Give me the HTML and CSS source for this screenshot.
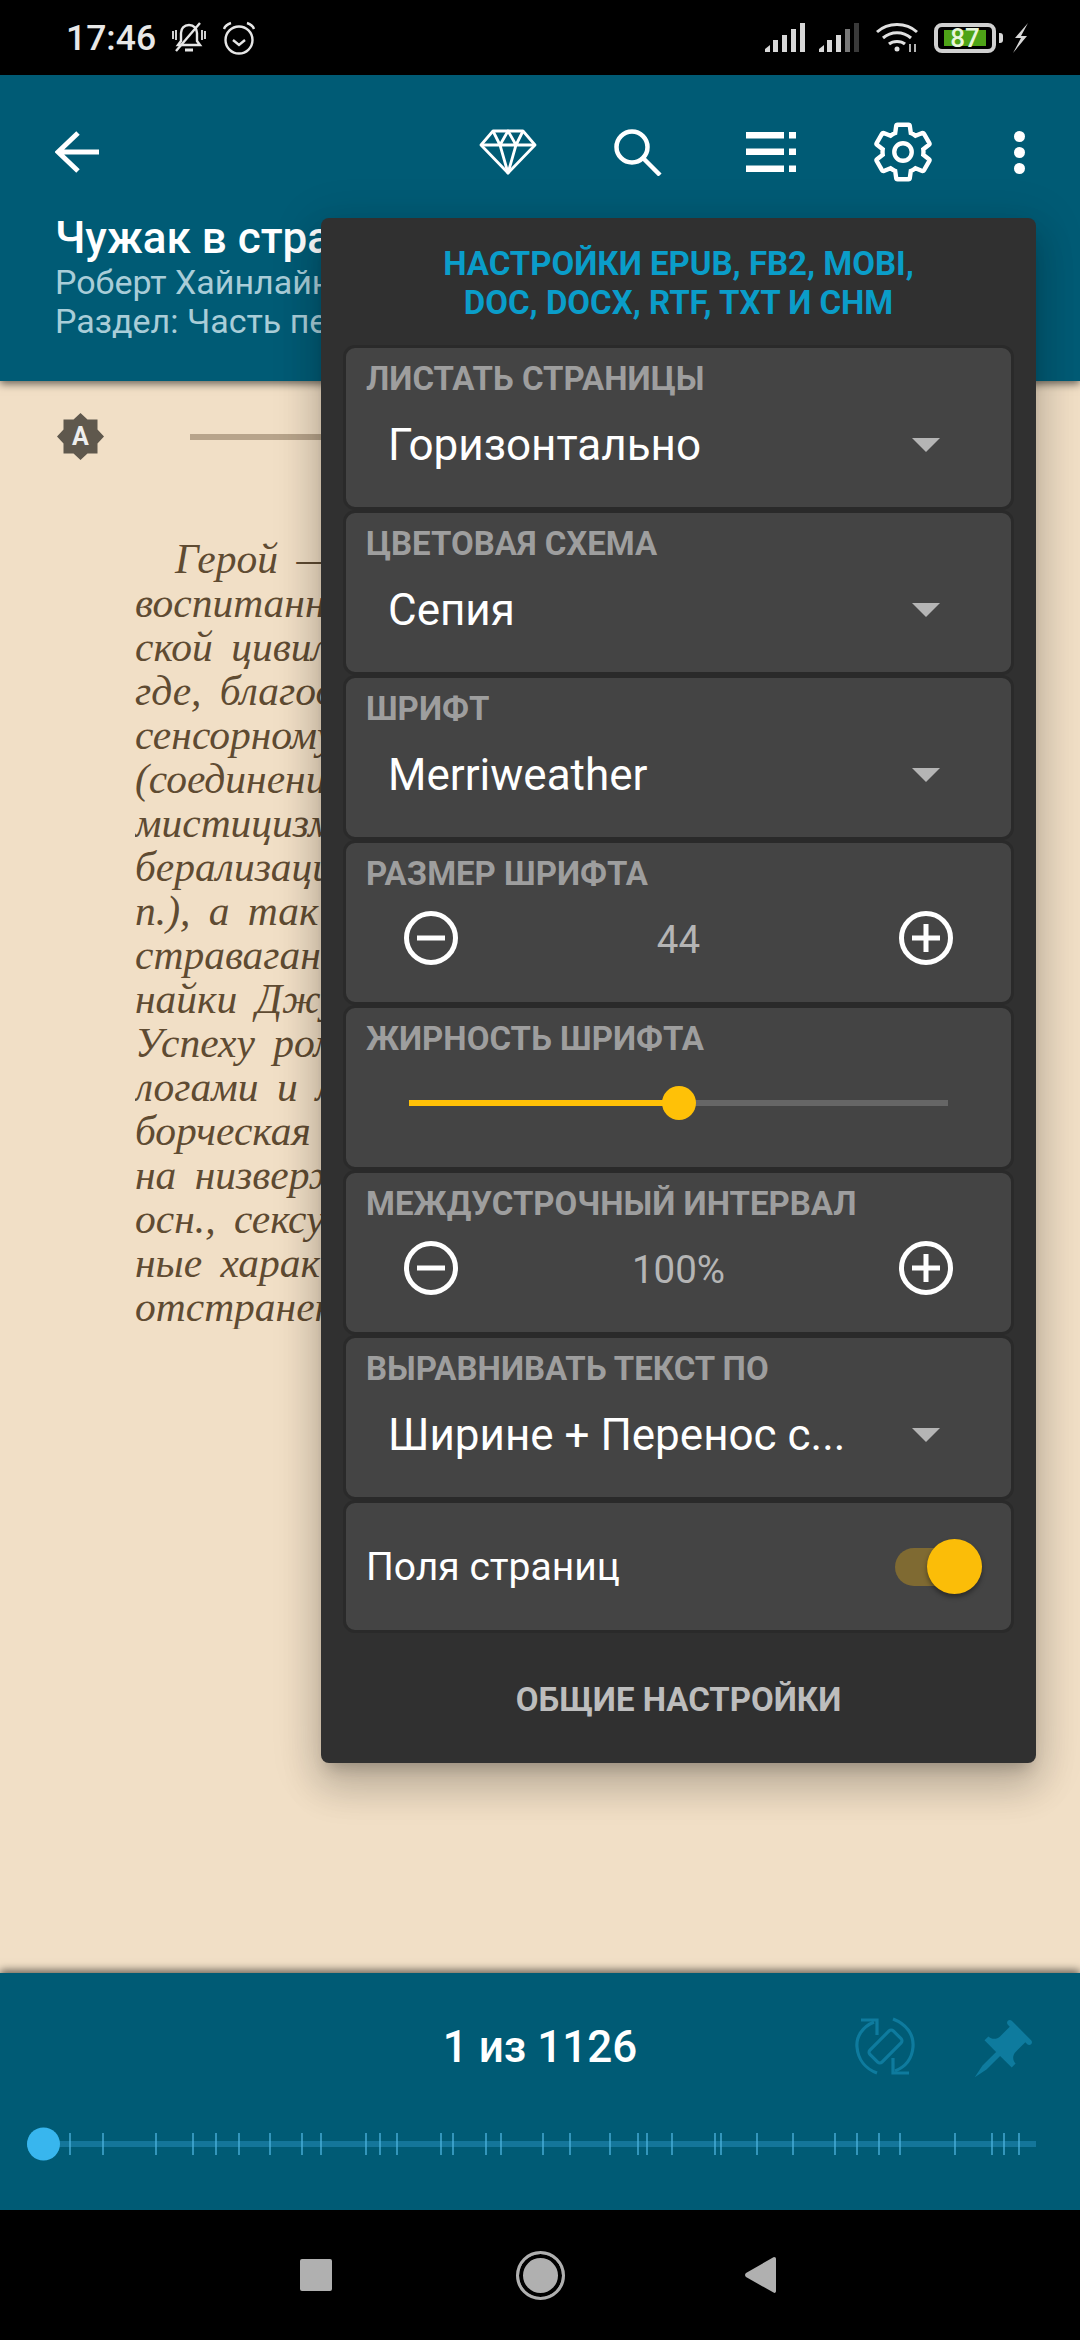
FILE: index.html
```html
<!DOCTYPE html>
<html lang="ru">
  <head>
    <meta charset="UTF-8" />
    <meta name="viewport" content="width=device-width, initial-scale=1.0" />
    <title>Чужак в стране</title>
    <link rel="stylesheet" href="styles.css">
  </head>
  <body>
    <div class="screen">
      <div class="statusbar">
        <span class="clock">17:46</span>
        <svg class="st-bell" viewBox="0 0 34 32" fill="none" stroke="#e6e6e6" stroke-width="2.4">
          <path d="M17 3c-5 0-8 3.500-8 8v8l-3 4h22l-3-4v-8c0-4.500-3-8-8-8z" />
          <path d="M13 28h8" stroke-width="3" />
          <path d="M1 9v8M33 9v8M4 8v10M30 8v10" stroke-width="1.800" />
          <path d="M28 1 4 29" />
        </svg>
        <svg class="st-alarm" viewBox="0 0 34 34" fill="none" stroke="#e6e6e6" stroke-width="2.400">
          <circle cx="17" cy="19" r="13.500" />
          <path d="M11 19l6 5 6-5" />
          <path d="M2 8c1-3 4-5 7-6M32 8c-1-3-4-5-7-6" />
        </svg>
        <div class="status-right">
          <svg class="st-signal" viewBox="0 0 40 29" fill="#d8d8d8">
            <path d="M0 29v-3l5-4v7zM8 29V17h5v12zM17 29V12h5v17zM26 29V6h5v23zM35 29V0h5v29z" />
          </svg>
          <svg class="st-signal" viewBox="0 0 40 29" fill="#d8d8d8">
            <path d="M0 29v-3l5-4v7zM8 29V17h5v12zM17 29V12h5v17z" />
            <path d="M26 29V6h5v23z" fill="#777" />
            <path d="M35 29V0h5v29z" fill="#3a3a3a" />
          </svg>
          <svg class="st-wifi" viewBox="0 0 42 30" fill="none" stroke="#e0e0e0" stroke-width="3">
            <path d="M1 9c11-10 29-10 40 0M7 15c8-7 20-7 28 0M13 21c4-3.500 12-3.500 16 0" />
            <circle cx="21" cy="26" r="2.500" fill="#e0e0e0" stroke="none" />
            <path d="M34 21v8M39 29v-8" stroke-width="1.600" />
          </svg>
          <div class="battery">
            <div class="battery-fill">87</div>
          </div>
          <span class="battery-nub"></span>
          <svg class="st-bolt" viewBox="0 0 16 30" fill="#d8d8d8">
            <path d="M15 0 2 15h6l-8 15 14-17H8z" />
          </svg>
        </div>
      </div>

      <div class="appbar">
        <div class="toolbar">
          <svg class="tb-back" viewBox="0 0 44 42" fill="none" stroke="#fff" stroke-width="5">
            <path d="M23 2 3 21l20 19M3 21h41" />
          </svg>
          <svg class="tb-gem" viewBox="0 0 58 46" fill="none" stroke="#fff" stroke-width="2.800" stroke-linejoin="round">
            <path d="M14 2h30l12 14-27 28L2 16z" />
            <path d="M2 16h54M14 2l7 14 8-14 8 14 7-14M21 16l8 28 8-28" />
          </svg>
          <svg class="tb-search" viewBox="0 0 48 47" fill="none" stroke="#fff" stroke-width="4.500">
            <circle cx="18" cy="18" r="15.500" />
            <path d="M28 28l18 18" />
          </svg>
          <svg class="tb-list" viewBox="0 0 50 40" fill="#fff">
            <path d="M0 0h38v6.500H0zM43 0h7v6.500h-7zM0 16.500h38V23H0zM43 16.500h7V23h-7zM0 33.500h38V40H0zM43 33.500h7V40h-7z" />
          </svg>
          <svg class="tb-gear" viewBox="1 1 22 22" fill="none" stroke="#fff" stroke-width="1.600">
            <path d="M19.430 12.980c.04-.32.07-.64.07-.98 0-.34-.03-.66-.07-.98l2.110-1.650c.19-.15.24-.42.12-.64l-2-3.460c-.09-.16-.26-.25-.44-.25-.06 0-.12.01-.17.03l-2.490 1c-.52-.4-1.080-.73-1.690-.98l-.38-2.650C14.460 2.180 14.250 2 14 2h-4c-.25 0-.46.18-.49.42l-.38 2.650c-.61.25-1.170.59-1.690.98l-2.490-1c-.06-.02-.12-.03-.18-.03-.17 0-.34.09-.43.25l-2 3.460c-.13.22-.07.49.12.64l2.110 1.650c-.04.32-.07.65-.07.98 0 .33.03.66.07.98l-2.110 1.650c-.19.15-.24.42-.12.64l2 3.460c.09.16.26.25.44.25.06 0 .12-.01.17-.03l2.490-1c.52.4 1.080.73 1.690.98l.38 2.650c.03.24.24.42.49.42h4c.25 0 .46-.18.49-.42l.38-2.650c.61-.25 1.170-.59 1.690-.98l2.490 1c.06.02.12.03.18.03.17 0 .34-.09.43-.25l2-3.460c.12-.22.07-.49-.12-.64l-2.110-1.650z" />
            <circle cx="12" cy="12" r="3.200" />
          </svg>
          <div class="tb-dots"><i></i><i></i><i></i></div>
        </div>
        <div class="book-info">
          <div class="book-title">Чужак в стра</div>
          <div class="book-sub">Роберт Хайнлайн</div>
          <div class="book-sub">Раздел: Часть пе</div>
        </div>
      </div>

      <div class="reader">
        <div class="page-head">
          <svg class="auto-badge" viewBox="0 0 47 47">
            <path fill="#5f584d" d="M23.500 0l7 6.500h10v10l6.500 7-6.500 7v10h-10l-7 6.500-7-6.500h-10v-10L0 23.500l6.500-7v-10h10z" />
            <text x="23.500" y="32" text-anchor="middle">A</text>
          </svg>
          <div class="page-rule"></div>
        </div>
        <div class="page-text">
          <div class="first">Герой —</div>
          <div>воспитанн</div>
          <div>ской цивил</div>
          <div>где, благод</div>
          <div>сенсорному</div>
          <div>(соединени</div>
          <div>мистицизм</div>
          <div>берализаци</div>
          <div>п.), а так</div>
          <div>страваган</div>
          <div>найки Джу</div>
          <div>Успеху ром</div>
          <div>логами и л</div>
          <div>борческая</div>
          <div>на низверж</div>
          <div>осн., сексуа</div>
          <div>ные харак</div>
          <div>отстранен</div>
        </div>
      </div>

      <div class="bottombar">
        <div class="pager">
          <span class="pager-count">1 из 1126</span>
          <svg class="pager-rotate" viewBox="0 0 60 58" fill="none" stroke="#0e7b9e" stroke-width="3.200">
            <path d="M19 5C7 10 1 20 2 30c1 13 9 22 20 26" />
            <path d="M6 3h16v15" />
            <path d="M38 2c13 5 21 15 20 28-1 12-8 20-18 24" />
            <path d="M54 56H38V41" />
            <rect x="14" y="21" width="33" height="17" rx="3" transform="rotate(-45 30.500 29.500)" />
          </svg>
          <svg class="pager-pin" viewBox="0 0 24 24" fill="#0e7b9e">
            <path transform="rotate(45 12 12)" d="M16 9V4h1c.55 0 1-.45 1-1s-.45-1-1-1H7c-.55 0-1 .45-1 1s.45 1 1 1h1v5c0 1.660-1.340 3-3 3v2h5.970v7l1.030 5 1.030-5v-7H19v-2c-1.660 0-3-1.340-3-3z" />
          </svg>
        </div>
        <svg class="page-slider" viewBox="0 0 1009 34">
          <rect x="0" y="14" width="1009" height="6" fill="#14769a" />
          <g stroke="#4fb6e0" stroke-width="1.300">
            <path d="M43 6v22M76 6v22M129 6v22M166 6v22M189 6v22M212 6v22M243 6v22M275 6v22M294 6v22M339 6v22M353 6v22M370 6v22M414 6v22M426 6v22M459 6v22M474 6v22M516 6v22M543 6v22M583 6v22M611 6v22M620 6v22M645 6v22M688 6v22M694 6v22M730 6v22M766 6v22M808 6v22M830 6v22M852 6v22M873 6v22M928 6v22M965 6v22M977 6v22M992 6v22" />
          </g>
          <circle cx="16.500" cy="17" r="16.500" fill="#38b6ee" />
        </svg>
      </div>

      <div class="navbar">
        <span class="nav-square"></span>
        <span class="nav-circle"></span>
        <svg class="nav-back" viewBox="0 0 31 36" fill="#b0b0b0">
          <path d="M29 0c1.500 0 2 .8 2 2v32c0 1.500-1 2.500-2.500 1.500L1 20c-1.300-1-1.300-3 0-4L28 .5z" />
        </svg>
      </div>

      <div class="dialog">
        <div class="dialog-head">НАСТРОЙКИ EPUB, FB2, MOBI,<br />DOC, DOCX, RTF, TXT И CHM</div>
        <div class="dialog-cards">
          <div class="card">
            <div class="card-label">ЛИСТАТЬ СТРАНИЦЫ</div>
            <div class="select"><span>Горизонтально</span><i class="caret"></i></div>
          </div>
          <div class="card">
            <div class="card-label">ЦВЕТОВАЯ СХЕМА</div>
            <div class="select"><span>Сепия</span><i class="caret"></i></div>
          </div>
          <div class="card">
            <div class="card-label">ШРИФТ</div>
            <div class="select"><span>Merriweather</span><i class="caret"></i></div>
          </div>
          <div class="card">
            <div class="card-label">РАЗМЕР ШРИФТА</div>
            <div class="stepper">
              <svg class="step-btn" viewBox="0 0 54 54"><circle cx="27" cy="27" r="24.500" /><path d="M13 27h28" /></svg>
              <span class="step-value">44</span>
              <svg class="step-btn" viewBox="0 0 54 54"><circle cx="27" cy="27" r="24.500" /><path d="M13 27h28M27 13v28" /></svg>
            </div>
          </div>
          <div class="card">
            <div class="card-label">ЖИРНОСТЬ ШРИФТА</div>
            <div class="range">
              <div class="range-track">
                <div class="range-fill" style="width: 50%"></div>
                <span class="range-thumb" style="left: 50%"></span>
              </div>
            </div>
          </div>
          <div class="card">
            <div class="card-label">МЕЖДУСТРОЧНЫЙ ИНТЕРВАЛ</div>
            <div class="stepper">
              <svg class="step-btn" viewBox="0 0 54 54"><circle cx="27" cy="27" r="24.500" /><path d="M13 27h28" /></svg>
              <span class="step-value">100%</span>
              <svg class="step-btn" viewBox="0 0 54 54"><circle cx="27" cy="27" r="24.500" /><path d="M13 27h28M27 13v28" /></svg>
            </div>
          </div>
          <div class="card">
            <div class="card-label">ВЫРАВНИВАТЬ ТЕКСТ ПО</div>
            <div class="select"><span>Ширине + Перенос с...</span><i class="caret"></i></div>
          </div>
          <div class="card card-switch">
            <span>Поля страниц</span>
            <div class="switch"><span class="switch-thumb"></span></div>
          </div>
        </div>
        <div class="dialog-foot">ОБЩИЕ НАСТРОЙКИ</div>
      </div>
    </div>
  </body>
</html>
```

FILE: styles.css
```css
/* Global styles */
* {
  box-sizing: border-box;
  margin: 0;
  padding: 0;
  font-family: Roboto, "Liberation Sans", sans-serif;
}

body {
  background-color: #000;
}

svg {
  display: block;
  flex: none;
}

.screen {
  position: relative;
  display: flex;
  flex-direction: column;
  width: 1080px;
  height: 2340px;
  overflow: hidden;
}

/* Status bar */
.statusbar {
  display: flex;
  align-items: center;
  height: 75px;
  padding: 0 50px 0 66px;
  background-color: #000;
}

.clock {
  width: 106px;
  font-size: 35.500px;
  font-weight: 500;
  color: #e8e8e8;
}

.st-bell {
  width: 34px;
  height: 32px;
}

.st-alarm {
  width: 34px;
  height: 34px;
  margin-left: 16px;
}

.status-right {
  display: flex;
  align-items: center;
  margin-left: auto;
}

.st-signal {
  width: 40px;
  height: 29px;
  margin-right: 14px;
}

.st-wifi {
  width: 42px;
  height: 30px;
  margin: 0 16px 0 3px;
}

.battery {
  width: 62px;
  height: 30px;
  padding: 3px;
  border: 4px solid #d0d0d0;
  border-radius: 8px;
}

.battery-fill {
  width: 42px;
  height: 16px;
  margin-left: 3px;
  background-color: #4ea317;
  color: #e8f5dc;
  font-size: 26px;
  font-weight: 500;
  line-height: 16px;
  text-align: center;
}

.battery-nub {
  width: 4px;
  height: 10px;
  margin: 0 9px 0 3px;
  border-radius: 0 3px 3px 0;
  background-color: #d8d8d8;
}

.st-bolt {
  width: 18px;
  height: 30px;
}

/* App bar */
.appbar {
  position: relative;
  z-index: 1;
  height: 306px;
  background-color: #005b75;
  box-shadow: 0 3px 8px rgba(0, 0, 0, 0.55);
}

.toolbar {
  display: flex;
  align-items: center;
  height: 140px;
  padding: 14px 55px 0;
}

.tb-back {
  width: 44px;
  height: 42px;
}

.tb-gem {
  width: 58px;
  height: 46px;
  margin-left: auto;
}

.tb-search {
  width: 48px;
  height: 47px;
  margin-left: 77px;
}

.tb-list {
  width: 50px;
  height: 40px;
  margin-left: 84px;
}

.tb-gear {
  width: 60px;
  height: 60px;
  margin-left: 77px;
}

.tb-dots {
  display: flex;
  flex-direction: column;
  gap: 5px;
  margin-left: 81px;
}

.tb-dots i {
  width: 11px;
  height: 11px;
  border-radius: 50%;
  background-color: #fff;
}

.book-info {
  width: 321px;
  padding-left: 55px;
  overflow: hidden;
  white-space: nowrap;
}

.book-title {
  margin-bottom: 2px;
  font-size: 44px;
  font-weight: 500;
  line-height: 46px;
  color: #fff;
}

.book-sub {
  font-size: 34px;
  line-height: 39px;
  color: #a9cdd8;
}

/* Page under the dialog */
.reader {
  flex: 1;
  padding: 32px 0 0 57px;
  overflow: hidden;
  background-color: #f1dfc6;
}

.page-head {
  display: flex;
  align-items: center;
}

.auto-badge {
  width: 47px;
  height: 47px;
}

.auto-badge text {
  font-family: Roboto, sans-serif;
  font-size: 25px;
  font-weight: 700;
  fill: #eee;
}

.page-rule {
  width: 131px;
  height: 6px;
  margin-left: 86px;
  background-color: #b8a48b;
}

.page-text {
  width: 186px;
  margin: 77px 0 0 78px;
  overflow: hidden;
  color: #5f4b32;
  white-space: nowrap;
}

.page-text div {
  font-family: "Liberation Serif", serif;
  font-size: 41.500px;
  font-style: italic;
  line-height: 44px;
  word-spacing: 8px;
}

.page-text .first {
  text-indent: 40px;
}

/* Bottom bar */
.bottombar {
  position: relative;
  z-index: 1;
  height: 237px;
  padding: 0 44px 0 27px;
  background-color: #005b75;
  box-shadow: 0 -3px 8px rgba(0, 0, 0, 0.55);
}

.pager {
  position: relative;
  height: 154px;
  padding-top: 48px;
  text-align: center;
}

.pager-count {
  margin-left: 17px;
  font-size: 44px;
  font-weight: 500;
  color: #fff;
}

.pager-rotate {
  position: absolute;
  top: 44px;
  left: 828px;
  width: 60px;
  height: 58px;
}

.pager-pin {
  position: absolute;
  top: 44px;
  left: 942px;
  width: 66px;
  height: 66px;
}

.page-slider {
  width: 1009px;
  height: 34px;
}

/* Nav bar */
.navbar {
  display: flex;
  align-items: center;
  height: 130px;
  padding: 0 304px 0 300px;
  background-color: #000;
}

.nav-square {
  width: 32px;
  height: 32px;
  border-radius: 2px;
  background-color: #b0b0b0;
}

.nav-circle {
  width: 49px;
  height: 49px;
  margin-left: 184px;
  border: 3px solid #b0b0b0;
  border-radius: 50%;
  background-color: #b0b0b0;
  box-shadow: inset 0 0 0 4px #000;
}

.nav-back {
  width: 31px;
  height: 36px;
  margin-left: 180px;
}

/* Settings dialog */
.dialog {
  position: absolute;
  top: 218px;
  left: 321px;
  z-index: 2;
  width: 715px;
  height: 1545px;
  padding: 0 22px;
  border-radius: 8px;
  background-color: #303030;
  box-shadow: 0 24px 38px 3px rgba(0, 0, 0, 0.14), 0 9px 46px 8px rgba(0, 0, 0, 0.12), 0 11px 15px -7px rgba(0, 0, 0, 0.2);
}

.dialog-head {
  height: 127px;
  padding-top: 26px;
  font-size: 33px;
  font-weight: 700;
  line-height: 39px;
  text-align: center;
  white-space: nowrap;
  color: #0a9dc9;
}

.dialog-cards {
  display: grid;
  grid-template-rows: repeat(7, 165px) 133px;
}

.card {
  padding: 13px 0 0 20px;
  border: 3px solid #2a2a2a;
  border-radius: 12px;
  background-color: #444;
}

.card-label {
  font-size: 33px;
  font-weight: 700;
  line-height: 36px;
  color: #9e9e9e;
}

.select {
  display: flex;
  align-items: center;
  justify-content: space-between;
  height: 54px;
  margin-top: 19px;
  padding: 0 71px 0 22px;
  font-size: 44px;
  color: #fff;
}

.select span {
  margin-top: 4px;
}

.caret {
  width: 0;
  height: 0;
  margin-top: 4px;
  border-top: 14px solid #b5b5b5;
  border-right: 14px solid transparent;
  border-left: 14px solid transparent;
}

.stepper {
  display: flex;
  align-items: center;
  justify-content: space-between;
  height: 54px;
  margin: 19px 58px 0 38px;
}

.step-btn {
  width: 54px;
  height: 54px;
  fill: none;
  stroke: #fff;
  stroke-width: 5;
}

.step-value {
  margin-top: 3px;
  font-size: 38.500px;
  color: #b5b5b5;
}

.range {
  display: flex;
  align-items: center;
  height: 54px;
  margin: 19px 63px 0 43px;
}

.range-track {
  position: relative;
  flex: 1;
  height: 6px;
  background-color: #666;
}

.range-fill {
  height: 100%;
  background-color: #ffc107;
}

.range-thumb {
  position: absolute;
  top: -14px;
  width: 34px;
  height: 34px;
  margin-left: -17px;
  border-radius: 50%;
  background-color: #ffc107;
}

.card-switch {
  display: flex;
  align-items: center;
  justify-content: space-between;
  padding: 0 29px 0 20px;
  font-size: 39px;
  color: #fff;
}

.switch {
  position: relative;
  width: 87px;
  height: 38px;
  border-radius: 19px;
  background-color: #7f6a32;
}

.switch-thumb {
  position: absolute;
  top: -9px;
  right: 0;
  width: 55px;
  height: 55px;
  border-radius: 50%;
  background-color: #fbbd08;
  box-shadow: 0 3px 5px rgba(0, 0, 0, 0.4);
}

.dialog-foot {
  padding-top: 47px;
  font-size: 33px;
  font-weight: 700;
  line-height: 40px;
  text-align: center;
  color: #bdbdbd;
}
```
